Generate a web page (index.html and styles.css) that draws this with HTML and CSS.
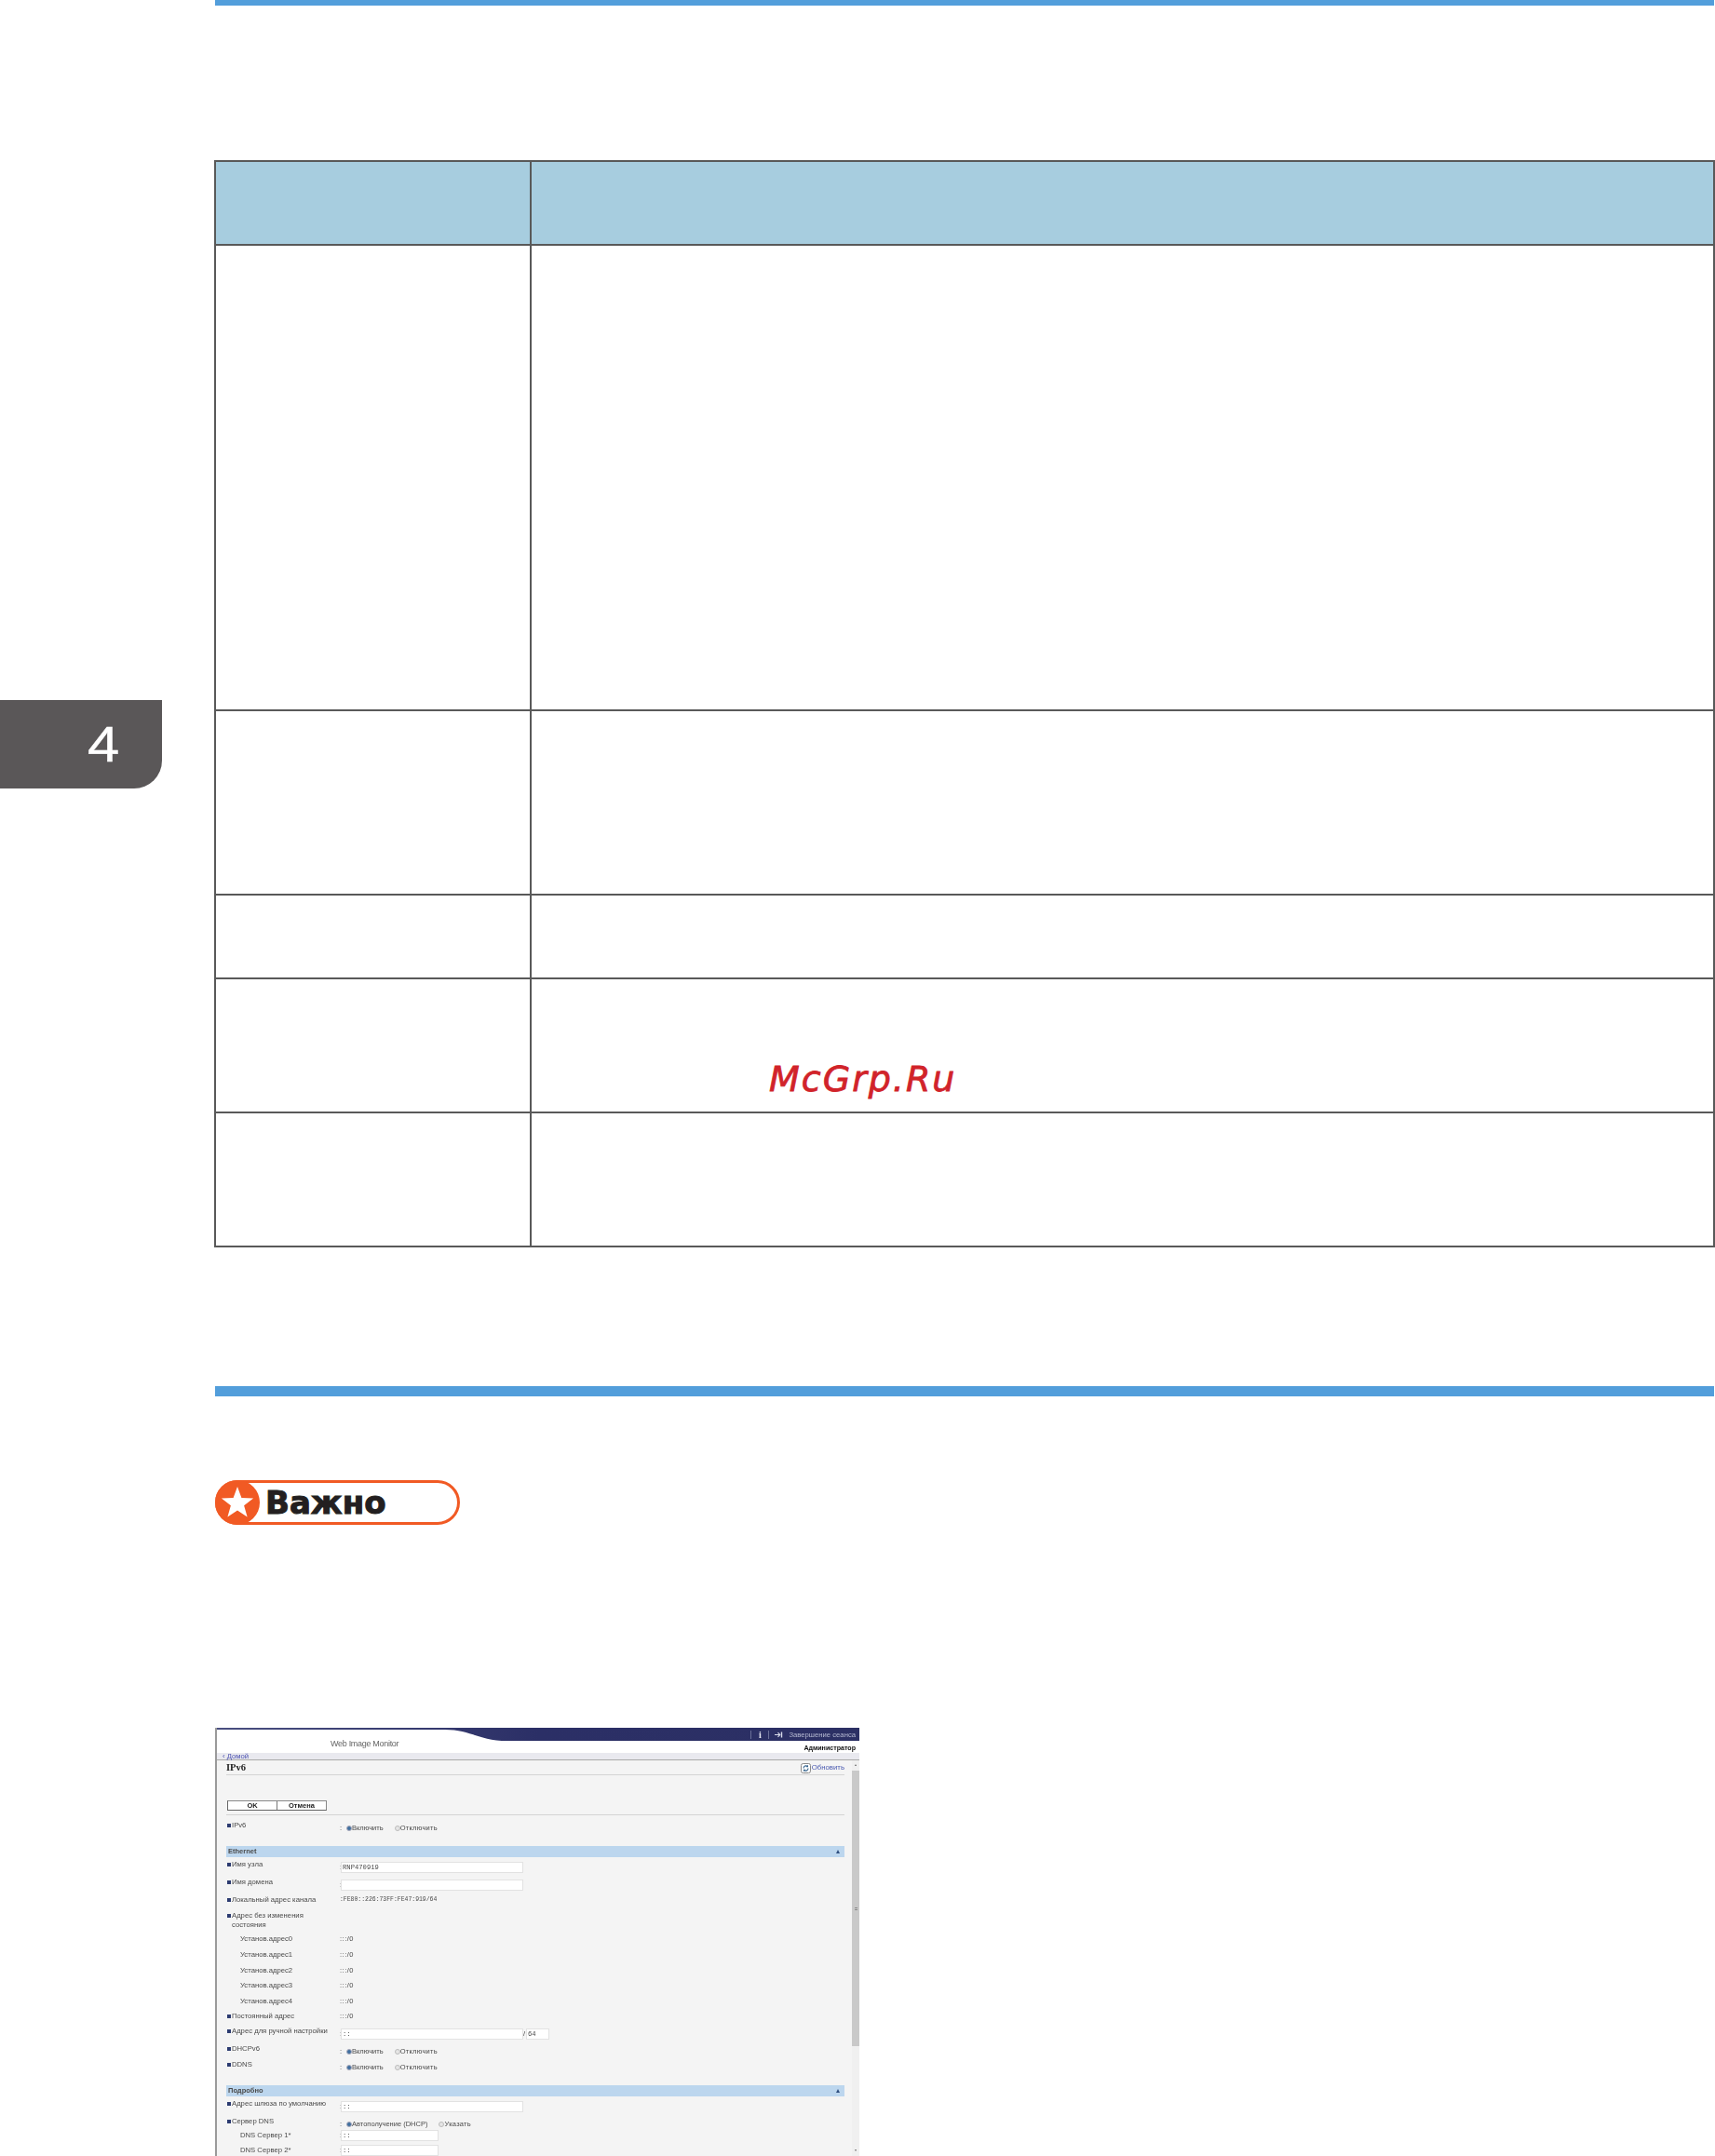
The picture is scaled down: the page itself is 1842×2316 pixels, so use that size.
FILE: index.html
```html
<!DOCTYPE html>
<html lang="ru">
<head>
<meta charset="utf-8">
<title>IPv6</title>
<link rel="stylesheet" href="styles.css">
</head>
<body>
<div class="page">
  <aside class="side"><div class="tab"><span class="tab-num">4</span></div></aside>
  <main class="doc">
    <div class="rule rule-top"></div>
    <table class="grid">
      <tr class="r-head"><td class="c1"></td><td class="c2"></td></tr>
      <tr class="r-500"><td></td><td></td></tr>
      <tr class="r-198"><td></td><td></td></tr>
      <tr class="r-90"><td></td><td></td></tr>
      <tr class="r-144"><td></td><td></td></tr>
      <tr class="r-144"><td></td><td></td></tr>
    </table>
    <div class="rule rule-mid"></div>
    <div class="badge">
      <svg class="badge-icon" width="48" height="48" viewBox="0 0 48 48"><circle cx="24" cy="24" r="24" fill="#f15a24"/><polygon fill="#fff" points="24,7 28.4,18.9 41.1,19.4 31.1,27.3 34.6,39.6 24,32.5 13.4,39.6 16.9,27.3 6.9,19.4 19.6,18.9"/></svg>
      <span class="badge-text">Важно</span>
    </div>
    <section class="shot">
      <header class="shot-head">
        <svg class="band" width="690" height="14" viewBox="0 0 690 14" preserveAspectRatio="none"><defs><linearGradient id="navy" x1="0" x2="1" y1="0" y2="0"><stop offset="0" stop-color="#4a4f80"/><stop offset="0.5" stop-color="#2b2f66"/><stop offset="1" stop-color="#2c3064"/></linearGradient></defs><path fill="url(#navy)" d="M0 0H690V14H312C282 14 272 2 245 2H0Z"/></svg>
        <div class="tools">
          <span class="tool-sep"></span><span class="tool-i">i</span><span class="tool-sep"></span>
          <svg class="tool-arrow" width="9" height="7" viewBox="0 0 9 7"><path d="M0 3.5H5M3.5 1.2L5.8 3.5L3.5 5.8" stroke="#d8dbea" stroke-width="1.1" fill="none"/><path d="M7.5 .5V6.5" stroke="#d8dbea" stroke-width="1.4"/></svg>
          <span class="tool-text">Завершение сеанса</span>
        </div>
        <div class="head-low">
          <span class="brand">Web Image Monitor</span>
          <span class="admin">Администратор</span>
        </div>
      </header>
      <nav class="crumb">‹ Домой</nav>
      <div class="shot-body">
        <div class="content">
          <div class="title-row">
            <span class="title">IPv6</span>
            <span class="refresh">
              <svg width="11" height="11" viewBox="0 0 11 11"><rect x=".5" y=".5" width="10" height="10" rx="2" fill="#fff" stroke="#8a8a8a"/><path d="M3 5.5A2.6 2.6 0 0 1 7.4 3.6M8 5.5A2.6 2.6 0 0 1 3.6 7.4" fill="none" stroke="#2f5f8a" stroke-width="1.1"/><path d="M8 1.8V4.2H5.8ZM3 9.2V6.8H5.2Z" fill="#2f5f8a"/></svg>
              Обновить
            </span>
          </div>
          <div class="actions">
            <div class="btns"><span class="btn">OK</span><span class="btn">Отмена</span></div>
          </div>
          <div class="form form-a">
            <div class="row h27"><span class="lbl bul">IPv6</span><div class="val"><span class="colon">:</span><span class="radio on"></span><span class="opt">Включить</span><span class="radio"></span><span class="opt">Отключить</span></div></div>
            <div class="bar"><b>Ethernet</b><i class="tri"></i></div>
            <div class="gap3"></div>
            <div class="row h19"><span class="lbl bul">Имя узла</span><div class="val"><span class="colon">:</span><span class="field mono">RNP470919</span></div></div>
            <div class="row h19"><span class="lbl bul">Имя домена</span><div class="val"><span class="colon">:</span><span class="field"></span></div></div>
            <div class="row h17"><span class="lbl bul">Локальный адрес канала</span><div class="val flat mono-s">:FE80::226:73FF:FE47:919/64</div></div>
            <div class="row h25"><span class="lbl bul">Адрес без изменения<br>состояния</span></div>
            <div class="row h17"><span class="lbl sub">Установ.адрес0</span><div class="val flat">:::/0</div></div>
            <div class="row h17"><span class="lbl sub">Установ.адрес1</span><div class="val flat">:::/0</div></div>
            <div class="row h16"><span class="lbl sub">Установ.адрес2</span><div class="val flat">:::/0</div></div>
            <div class="row h17"><span class="lbl sub">Установ.адрес3</span><div class="val flat">:::/0</div></div>
            <div class="row h16"><span class="lbl sub">Установ.адрес4</span><div class="val flat">:::/0</div></div>
            <div class="row h16"><span class="lbl bul">Постоянный адрес</span><div class="val flat">:::/0</div></div>
            <div class="row h19"><span class="lbl bul">Адрес для ручной настройки</span><div class="val"><span class="colon">:</span><span class="field mono">::</span><span class="slash">/</span><span class="field field-s mono">64</span></div></div>
            <div class="row h17"><span class="lbl bul">DHCPv6</span><div class="val"><span class="colon">:</span><span class="radio on"></span><span class="opt">Включить</span><span class="radio"></span><span class="opt">Отключить</span></div></div>
            <div class="row h27"><span class="lbl bul">DDNS</span><div class="val"><span class="colon">:</span><span class="radio on"></span><span class="opt">Включить</span><span class="radio"></span><span class="opt">Отключить</span></div></div>
            <div class="bar"><b>Подробно</b><i class="tri"></i></div>
            <div class="gap3"></div>
            <div class="row h19"><span class="lbl bul">Адрес шлюза по умолчанию</span><div class="val"><span class="colon">:</span><span class="field mono">::</span></div></div>
            <div class="row h15"><span class="lbl bul">Сервер DNS</span><div class="val"><span class="colon">:</span><span class="radio on"></span><span class="opt">Автополучение (DHCP)</span><span class="radio"></span><span class="opt">Указать</span></div></div>
            <div class="row h16"><span class="lbl sub">DNS Сервер 1*</span><div class="val up"><span class="colon">:</span><span class="field field-m mono">::</span></div></div>
            <div class="row h16"><span class="lbl sub">DNS Сервер 2*</span><div class="val up"><span class="colon">:</span><span class="field field-m mono">::</span></div></div>
          </div>
        </div>
        <div class="scroll">
          <i class="sc-up"></i>
          <div class="thumb"><i class="grip"></i></div>
          <i class="sc-down"></i>
        </div>
      </div>
    </section>
  </main>
  <div class="mark">McGrp.Ru</div>
</div>
</body>
</html>
```

FILE: styles.css
```css
* { box-sizing: border-box; }
html, body { margin: 0; padding: 0; background: #fff; }
.page {
  position: relative;
  display: grid;
  grid-template-columns: 230px 1612px;
  width: 1842px;
  height: 2316px;
  overflow: hidden;
  font-family: "Liberation Sans", Arial, sans-serif;
}
.side { padding-top: 752px; }
.tab {
  display: flex;
  align-items: flex-start;
  width: 174px;
  height: 95px;
  padding: 22px 0 0 94px;
  background: #5a5758;
  border-bottom-right-radius: 30px;
}
.tab-num {
  display: block;
  color: #fff;
  font: 400 53px/52px "Liberation Sans", sans-serif;
  transform: scaleX(1.16);
  transform-origin: left center;
  -webkit-text-stroke: 0.4px #fff;
}
.doc { display: flex; flex-direction: column; }
.rule { margin: 0 1px; background: #529edb; }
.rule-top { height: 6px; }
.rule-mid { height: 11px; margin-top: 149px; }

.grid {
  border-collapse: separate;
  border-spacing: 0;
  table-layout: fixed;
  width: 1612px;
  margin-top: 166px;
  border-top: 2px solid #595959;
  border-left: 2px solid #595959;
}
.grid td {
  padding: 0;
  border-right: 2px solid #595959;
  border-bottom: 2px solid #595959;
}
.c1 { width: 339px; }
.c2 { width: 1271px; }
.r-head td { height: 90px; background: #a7cddf; }
.r-500 td { height: 500px; }
.r-198 td { height: 198px; }
.r-90 td { height: 90px; }
.r-144 td { height: 144px; }

.badge {
  display: flex;
  align-items: center;
  width: 263px;
  height: 48px;
  margin: 90px 0 0 1px;
  border: 3px solid #f15a24;
  border-radius: 24px;
}
.badge-icon { flex: none; margin-left: -3px; }
.badge-text {
  margin-left: 6px;
  color: #231f20;
  font: 700 34px/40px "DejaVu Sans", sans-serif;
  -webkit-text-stroke: 1px #231f20;
}

.shot {
  flex: none;
  width: 692px;
  height: 460px;
  margin: 218px 0 0 1px;
  overflow: hidden;
  background: #f4f4f4;
  border-left: 2px solid #9a9a9a;
  color: #4a4a4a;
  font-size: 7.7px;
  line-height: 10px;
  filter: blur(0.4px);
}
.shot-head { position: relative; height: 27px; background: #fff; }
.band { position: absolute; left: 0; top: 0; }
.tools {
  position: relative;
  display: flex;
  align-items: center;
  justify-content: flex-end;
  height: 14px;
  padding: 1px 4px 0 0;
  color: #b4b8d0;
}
.tool-sep { width: 1px; height: 9px; background: #6a6f98; }
.tool-i { width: 18px; color: #e4e6f0; font: 700 10px/10px "Liberation Serif", serif; text-align: center; }
.tool-arrow { margin: 0 6px; }
.tool-text { font-size: 7.7px; }
.head-low {
  display: flex;
  justify-content: space-between;
  height: 13px;
  padding: 0 4px 0 122px;
}
.brand { color: #666; font-size: 9px; line-height: 6px; letter-spacing: -.3px; }
.admin { color: #111; font-size: 7.1px; font-weight: 700; line-height: 16px; }
.crumb {
  height: 8px;
  padding-left: 6px;
  background: #e9e9ef;
  border-bottom: 1px solid #a9a9a9;
  color: #4a50b0;
  line-height: 8px;
}

.shot-body { display: flex; }
.content { flex: none; width: 674px; padding-left: 10px; }
.title-row {
  display: flex;
  align-items: center;
  justify-content: space-between;
  height: 16px;
  padding-top: 1px;
  border-bottom: 1px solid #d4d4d4;
}
.title { color: #222; font: 700 10.5px/12px "Liberation Serif", serif; }
.refresh { display: flex; align-items: center; gap: 1px; color: #4a5ab0; font-size: 7.8px; }
.actions { height: 43px; padding-top: 27px; border-bottom: 1px solid #d4d4d4; }
.btns { display: flex; width: 107px; height: 11px; margin-left: 1px; border: 1px solid #666; border-top-color: #888; border-right-color: #888; background: #fff; }
.btn { flex: 1; color: #222; font-size: 7.5px; font-weight: 700; line-height: 9px; text-align: center; }
.btn + .btn { border-left: 1px solid #777; }

.form-a { padding-top: 6px; }
.row { display: flex; }
.h15 { height: 15px; }
.h16 { height: 16px; }
.h17 { height: 17px; }
.h19 { height: 19px; }
.h25 { height: 25px; }
.h27 { height: 27px; }
.lbl { flex: none; width: 122px; }
.bul { position: relative; padding-left: 6px; }
.bul::before {
  content: "";
  position: absolute;
  left: 1px;
  top: 3px;
  width: 4px;
  height: 4px;
  background: #2c3b70;
}
.sub { padding-left: 15px; }
.val { display: flex; align-items: center; align-self: flex-start; height: 12px; margin-top: 2px; font-size: 7.5px; }
.val.flat { display: block; height: 10px; margin-top: 0; letter-spacing: .5px; }
.val.up { margin-top: -1px; }
.colon { width: 1px; }
.radio {
  flex: none;
  width: 6px;
  height: 6px;
  margin-left: 6px;
  border: 1px solid #bbb;
  border-radius: 50%;
  background: #e6e6e6;
}
.radio + .opt + .radio { margin-left: 0; }
.radio + .opt + .radio + .opt { letter-spacing: .25px; }
.radio.on { background: #3f6f9f; border-color: #aab; }
.opt { margin: 0 12px 0 0; }
.field {
  flex: none;
  width: 196px;
  height: 12px;
  padding-left: 1px;
  background: #fff;
  border: 1px solid #e2e2e2;
  line-height: 10px;
}
.field-s { width: 25px; }
.field-m { width: 105px; }
.slash { width: 3px; }
.mono { font-family: "Liberation Mono", monospace; font-size: 7.2px; }
.val.mono-s { font-family: "Liberation Mono", monospace; font-size: 6.45px; letter-spacing: 0; }
.bar {
  display: flex;
  align-items: center;
  justify-content: space-between;
  width: 664px;
  height: 12px;
  padding: 0 5px 0 2px;
  background: #bcd6ee;
}
.bar b { color: #4a4a4a; font-size: 7.5px; font-weight: 700; }
.tri { width: 0; height: 0; border: 2.5px solid transparent; border-top: 0; border-bottom: 4px solid #2f4f80; }
.gap3 { height: 3px; }

.scroll { display: flex; flex-direction: column; align-items: center; flex: none; width: 8px; margin-left: 8px; background: #f0f0f0; }
.sc-up, .sc-down { width: 0; height: 0; border: 1.5px solid transparent; }
.sc-up { margin-top: 4px; border-top: 0; border-bottom: 2px solid #666; }
.thumb { display: flex; align-items: center; justify-content: center; width: 8px; height: 296px; margin-top: 5px; background: #c9c9c9; }
.grip { width: 3px; height: 3px; border-top: 1px solid #888; border-bottom: 1px solid #888; }
.sc-down { margin-top: 111px; border-bottom: 0; border-top: 2px solid #666; }

.mark {
  position: absolute;
  left: 826px;
  top: 1136px;
  color: #d1232a;
  font: italic 400 38px/46px "DejaVu Sans", sans-serif;
  letter-spacing: 2px;
  -webkit-text-stroke: 0.8px #d1232a;
}
```
